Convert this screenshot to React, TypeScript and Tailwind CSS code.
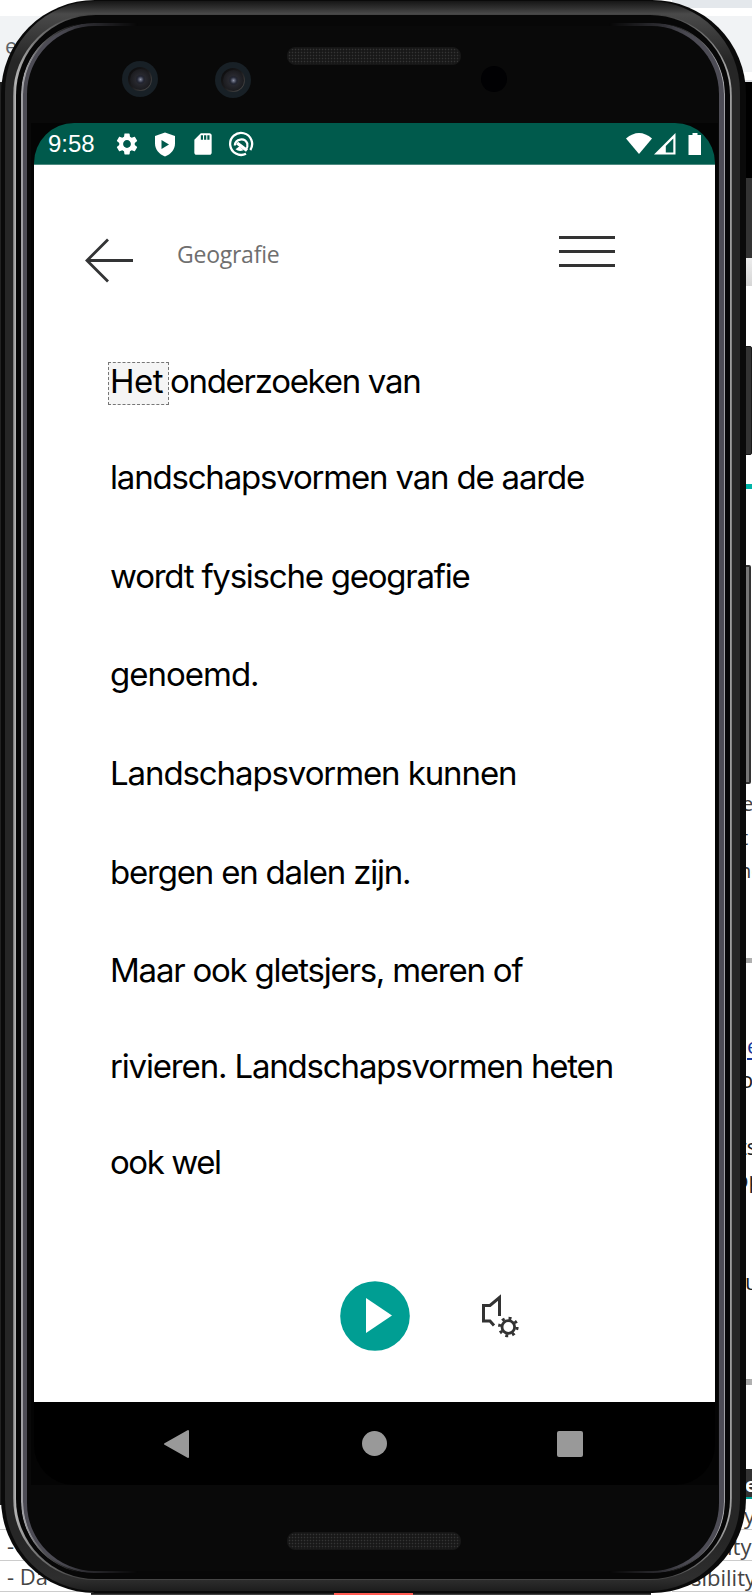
import { MdSdCard, MdSettings } from "react-icons/md";

const lines = [
  { text: "landschapsvormen van de aarde", cls: "h-[99px] tracking-[-1.19px]" },
  { text: "wordt fysische geografie", cls: "h-[98px] tracking-[-1.24px]" },
  { text: "genoemd.", cls: "h-[99px] tracking-[-1px]" },
  { text: "Landschapsvormen kunnen", cls: "h-[99px] tracking-[-1.1px]" },
  { text: "bergen en dalen zijn.", cls: "h-[98px] tracking-[-1.2px]" },
  { text: "Maar ook gletsjers, meren of", cls: "h-[96px] tracking-[-1.23px]" },
  { text: "rivieren. Landschapsvormen heten", cls: "h-[96px] tracking-[-1.17px]" },
  { text: "ook wel", cls: "h-[96px] tracking-[-1.45px]" },
];

const desktopRows = [
  { cls: "h-[8px] bg-[#e4e8ec]" },
  { cls: "h-[8px] bg-white" },
  { cls: "h-[56px] bg-[#f1f3f5]" },
  { cls: "h-[8px] bg-white" },
  { cls: "h-[2px] bg-[#dddfe2]" },
  { cls: "h-[96px] bg-black" },
  { cls: "h-[80px] bg-[#333]" },
  { cls: "h-[28px] bg-linear-to-b from-[#ececec] to-[#d6d6d6]" },
  { cls: "h-[198px] bg-white" },
  { cls: "h-[5px] bg-[#00b5a8]" },
  { cls: "h-[299px] bg-white" },
  { cls: "h-[34px] pl-[70px] text-[20px] text-[#444]", text: "e" },
  { cls: "h-[33px] pl-[69px] text-[20px] text-[#444]", text: "t" },
  { cls: "h-[34px] pl-[67px] text-[20px] text-[#444]", text: "ne" },
  { cls: "h-[69px]" },
  { cls: "h-[5px] bg-[#b0b0b0]" },
  { cls: "h-[66px]" },
  { cls: "h-[34px] pl-[75px] text-[22px] text-[#1a3a9c] underline underline-offset-4", text: "e" },
  { cls: "h-[33px] pl-[68px] text-[22px] text-[#222]", text: "o" },
  { cls: "h-[34px]" },
  { cls: "h-[33px] pl-[67px] text-[22px] text-[#222]", text: "ts" },
  { cls: "h-[42px] pl-[63px] text-[22px] text-[#222]", text: "pp" },
  { cls: "h-[60px]" },
  { cls: "h-[35px] pl-[73px] text-[22px] text-[#222]", text: "u" },
  { cls: "h-[79px]" },
  { cls: "h-[6px] bg-[#b0b0b0]" },
  { cls: "h-[84px]" },
  { cls: "h-[30px] bg-[#333] border-b-2 border-[#00a59a] pl-[73px] text-[20px] font-bold text-white", text: "e" },
  { cls: "h-[31px] border-b border-[#ccc] pl-[72px] text-[22px] text-[#444]", text: "y" },
  { cls: "h-[31px] border-b border-[#ccc] pl-[55px] text-[22px] text-[#444]", text: "ity" },
  { cls: "h-[31px] border-b border-[#ccc] pl-[19px] text-[22px] text-[#444]", text: "sibility" },
];

function Desktop() {
  return (
    <div className="col-start-1 row-start-1 flex justify-between overflow-hidden bg-white font-['Open_Sans',sans-serif]">
      <div className="flex w-[90px] flex-col">
        <div className="h-[16px]" />
        <div className="flex h-[66px] bg-[#f1f3f5] pt-[14px] pl-[5px] text-[22px] leading-[30px] text-[#5f6368]">e</div>
        <div className="h-[1423px] w-[20px] bg-[#222]" />
        <div className="h-[25px] border-b border-[#ccc]" />
        <div className="h-[31px] border-b border-[#ccc] pl-[7px] text-[22px] leading-[31px] text-[#444]">-</div>
        <div className="h-[31px] border-b border-[#ccc] pl-[7px] text-[22px] leading-[31px] whitespace-nowrap text-[#444]">- Da</div>
      </div>
      <div className="flex w-[80px] flex-col">
        {desktopRows.map((r, i) => (
          <div key={i} className={`shrink-0 overflow-hidden leading-[32px] whitespace-nowrap ${r.cls}`}>
            {r.text}
          </div>
        ))}
      </div>
    </div>
  );
}

function Speaker() {
  return (
    <div className="h-[18px] w-[174px] rounded-[8px] border border-[#161616] bg-[#181818] bg-[radial-gradient(circle,#343434_0.6px,transparent_1.1px)] bg-size-[3px_3px]" />
  );
}

function Camera() {
  return (
    <div className="flex size-[36px] items-center justify-center rounded-full bg-[#182026]">
      <div className="flex size-[24px] items-center justify-center rounded-full bg-linear-to-br from-[#0a0a0b] via-[#1b1b1d] to-[#5a5856]">
        <div className="flex size-[21px] items-center justify-center rounded-full bg-radial from-[#33343c] to-[#121214]">
          <div className="size-[9px] rounded-full bg-radial from-[#8b90a4] via-[#272a38] to-[#151518]" />
        </div>
      </div>
    </div>
  );
}

function Shell() {
  return (
    <>
      <div className="absolute top-0 right-0 bottom-[2px] left-[1px] rounded-[94px] bg-[#0a0a0a]" />
      <div className="absolute top-[1px] right-[6px] bottom-[4px] left-[5px] rounded-[91px] bg-[linear-gradient(#161616,#2c2c2c_6px,#4a4a4a_13px,#262626_60px,#262626_1540px,#2e2e2e_1578px,#1d1d1d)]" />
      <div className="absolute top-[14px] right-[14px] bottom-[15px] left-[13px] rounded-[82px] bg-[linear-gradient(to_right,#6d6d6d,#b4b4b4_2px,#777_22px,#444_65px,#444_655px,#777_697px,#aaa_717px,#777)]" />
      <div className="absolute top-[15px] right-[16px] bottom-[16px] left-[16px] rounded-[80px] bg-[#070707]" />
      <div className="absolute top-[22px] right-[21px] bottom-[21px] left-[21px] rounded-[72px] bg-[#a0a0a4] mask-[linear-gradient(to_right,#000_4px,#0008_22px,transparent_60px,transparent_644px,#0008_682px,#000_700px)]" />
      <div className="absolute top-[23px] right-[22px] bottom-[22px] left-[23px] rounded-[71px] bg-[#4d4c55] mask-[linear-gradient(to_right,#000_25px,#0008_65px,transparent_115px,transparent_586px,#0008_636px,#000_676px)]" />
      <div className="absolute top-[26px] right-[27px] bottom-[24px] left-[27px] rounded-[68px] bg-[#090909]" />
    </>
  );
}

function StatusBar() {
  return (
    <div className="flex h-[42px] shrink-0 items-center border-b border-[#4d8a80] bg-[#005a4c] pr-[12px] pl-[14px] text-white">
      <span className="w-[66px] pt-[1px] font-['Liberation_Sans',sans-serif] text-[24px] leading-[28px]">9:58</span>
      <MdSettings size={26} className="mt-[1px]" />
      <svg className="mt-[1px] ml-[14px]" width="22" height="25" viewBox="0 0 22 25">
        <path d="M11 .5 21 4v7.500c0 6-4.300 11-10 13-5.700-2-10-7-10-13V4z" fill="#fff" />
        <path d="M7.500 8v9l7.500-4.500z" fill="#005a4c" />
      </svg>
      <MdSdCard size={26} className="mt-[1px] ml-[14px]" />
      <svg className="mt-[1px] ml-[12px]" width="26" height="26" viewBox="0 0 26 26" fill="none" stroke="#fff">
        <path d="M22.300 19A11 11 0 1 0 18 22.800" strokeWidth="2.300" />
        <path d="M6.800 14.500A6.500 6.500 0 0 1 19.300 12.500Q20 16 18 18.500" strokeWidth="2.200" />
        <path d="M9 12 19 19.500" strokeWidth="3.400" />
        <path d="M7.500 18.200 11.500 15.200 15.500 19.200Q11 21 7.500 18.200z" fill="#fff" stroke="none" />
      </svg>
      <svg className="mt-[2px] ml-auto" width="77" height="26" viewBox="0 0 77 26">
        <path d="M0 6.500Q13-4.500 26 6.500L13 22z" fill="#fff" />
        <path d="M28 22.500 49.500 1v21.500zM39.800 14v6.500h7.500V6.500z" fill="#fff" fillRule="evenodd" />
        <path d="M66.500 1h5v2h3.500v20H62.500V3h4z" fill="#fff" />
      </svg>
    </div>
  );
}

function AppScreen() {
  return (
    <div className="flex h-[1237px] shrink-0 flex-col bg-white">
      <header className="flex h-[177px] items-start">
        <svg className="mt-[73px] ml-[50px]" width="50" height="46" viewBox="0 0 50 46" fill="none" stroke="#333435" strokeWidth="2.800">
          <path d="M49 22.500H3M24 1.500 3 22.500l21 21" />
        </svg>
        <h1 className="mt-[73px] ml-[43px] font-['Open_Sans',sans-serif] text-[23px] leading-[32px] tracking-[-0.250px] text-[#6f6f6f]">Geografie</h1>
        <div className="mt-[71px] ml-auto mr-[100px] flex w-[56px] flex-col gap-[11px]">
          <div className="h-[3px] bg-[#333]" />
          <div className="h-[3px] bg-[#333]" />
          <div className="h-[3px] bg-[#333]" />
        </div>
      </header>
      <main className="flex h-[924px] flex-col pl-[76px] font-[Inter,sans-serif] text-[33px] leading-[42px] whitespace-nowrap text-black">
        <p className="flex h-[96px] shrink-0 items-start pt-[18px] tracking-[-1.290px]">
          <span className="mt-[2px] -ml-[2px] h-[43px] w-[61px] border border-dashed border-[#777] bg-[#f5f5f5] pl-[1px] leading-[36px] tracking-[-0.500px]">Het</span>
          <span className="ml-[1px]">onderzoeken van</span>
        </p>
        {lines.map((l) => (
          <p key={l.text} className={`flex shrink-0 items-start pt-[18px] ${l.cls}`}>
            {l.text}
          </p>
        ))}
      </main>
      <div className="flex pt-[15px] pl-[306px]">
        <svg width="70" height="70" viewBox="0 0 70 70">
          <circle cx="35" cy="35" r="34.800" fill="#009e93" />
          <path d="M26 17v35L52 34.500z" fill="#fff" />
        </svg>
        <svg className="mt-[12px] ml-[70px]" width="42" height="46" viewBox="480 1294 42 46" fill="none" stroke="#333">
          <path d="M499.500 1317v-18.500l-9.500 8h-6.500v15.500h6.500l4 4.500" strokeWidth="3" />
          <circle cx="508.300" cy="1328" r="6.300" strokeWidth="2.800" />
          <circle cx="508.300" cy="1328" r="8.800" strokeWidth="3" strokeDasharray="2.900 4.011" />
        </svg>
      </div>
    </div>
  );
}

function NavBar() {
  return (
    <div className="flex h-[83px] shrink-0 items-center justify-between bg-black pr-[132px] pl-[129px]">
      <svg width="27" height="30" viewBox="0 0 27 30">
        <path d="M2 15 25 2v26z" fill="#999" stroke="#999" strokeWidth="2" strokeLinejoin="round" />
      </svg>
      <div className="ml-[2px] size-[25px] rounded-full bg-[#999]" />
      <div className="size-[26px] rounded-[2px] bg-[#999]" />
    </div>
  );
}

export default function App() {
  return (
    <div className="grid h-[1595px] w-[752px] grid-cols-[752px] grid-rows-[1595px] overflow-hidden bg-white">
      <Desktop />
      <div className="col-start-1 row-start-1 flex flex-col items-end">
        <div className="mt-[346px] h-[109px] w-[8px] rounded-[2px] border border-[#1a1a1a] bg-[#333]" />
        <div className="mt-[110px] mr-[1px] h-[219px] w-[7px] rounded-[2px] border-2 border-[#333] bg-[#777]" />
      </div>
      <div className="relative col-start-1 row-start-1 h-[1595px] w-[746px]">
        <Shell />
        <div className="relative flex h-full flex-col">
          <div className="flex h-[123px] shrink-0 items-start">
            <div className="mt-[61px] ml-[122px]"><Camera /></div>
            <div className="mt-[62px] ml-[57px]"><Camera /></div>
            <div className="mt-[47px] ml-[36px]"><Speaker /></div>
            <div className="mt-[66px] ml-[20px] size-[26px] rounded-full bg-[#010103]" />
          </div>
          <div className="mr-[28px] ml-[31px] flex h-[1362px] shrink-0 flex-col bg-[#040404] px-[3px]">
            <div className="flex h-full flex-col overflow-hidden rounded-[40px]">
              <StatusBar />
              <AppScreen />
              <NavBar />
            </div>
          </div>
          <div className="mt-[47px] ml-[287px]"><Speaker /></div>
          <div className="mt-auto flex pl-[91px]">
            <div className="h-[2px] w-[243px] bg-linear-to-b from-[#0a0a0a] to-[#555]" />
            <div className="h-[2px] w-[79px] bg-[#ff5a50]" />
            <div className="h-[2px] w-[238px] bg-linear-to-b from-[#0a0a0a] to-[#555]" />
          </div>
        </div>
      </div>
    </div>
  );
}
